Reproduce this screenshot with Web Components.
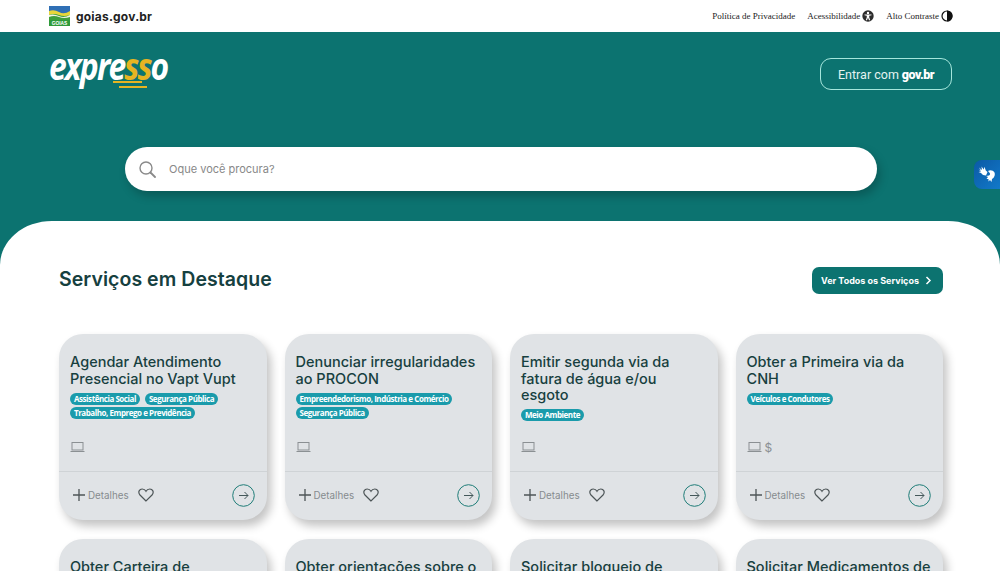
<!DOCTYPE html>
<html lang="pt-BR">
<head>
<meta charset="utf-8">
<title>Expresso</title>
<style>
    html, body { margin: 0; height: 571px; overflow: hidden; }
    body { background: #0c7370; font-family: 'Inter', sans-serif; }
</style>
</head>
<body>
<gov-topbar></gov-topbar>
<hero-header></hero-header>
<services-section>
    <service-card title="Agendar Atendimento Presencial no Vapt Vupt" tags="Assistência Social|Segurança Pública|Trabalho, Emprego e Previdência"></service-card>
    <service-card title="Denunciar irregularidades ao PROCON" tags="Empreendedorismo, Indústria e Comércio|Segurança Pública"></service-card>
    <service-card title="Emitir segunda via da fatura de água e/ou esgoto" tags="Meio Ambiente"></service-card>
    <service-card title="Obter a Primeira via da CNH" tags="Veículos e Condutores" paid></service-card>
    <service-card title="Obter Carteira de"></service-card>
    <service-card title="Obter orientações sobre o"></service-card>
    <service-card title="Solicitar bloqueio de"></service-card>
    <service-card title="Solicitar Medicamentos de"></service-card>
</services-section>
<vlibras-tab></vlibras-tab>

<script>
class GovTopbar extends HTMLElement {
    constructor() {
        super();
        this.attachShadow({ mode: 'open' }).innerHTML = `
<style>
    :host { display: flex; align-items: center; justify-content: space-between; height: 32px; background: #fff; padding: 0 47px 0 49px; }
    .brand { display: flex; align-items: center; gap: 6px; }
    .brand svg { display: block; }
    .brand span { font: 700 12px 'Inter', sans-serif; color: #222; letter-spacing: .2px; }
    nav { display: flex; align-items: center; gap: 12px; font: 9px 'Liberation Serif', serif; color: #222; }
    nav div { display: flex; align-items: center; gap: 2px; }
</style>
<div class="brand">
    <svg width="21" height="20" viewBox="0 0 21 20">
        <rect width="21" height="20" fill="#3f9e3c"/>
        <rect width="21" height="8" fill="#2f6fb5"/>
        <path d="M0 5 Q5 3 10 6 T21 5 V9 Q15 11 10 9 T0 9Z" fill="#e8d63a"/>
        <path d="M0 9 Q5 7.500 10 10 T21 9 V11 Q15 13 10 11 T0 11Z" fill="#f3f3e4"/>
        <rect y="14" width="21" height="6" fill="#2f9a3a"/>
        <text x="10.500" y="18.800" text-anchor="middle" font-family="Liberation Sans, sans-serif" font-size="4.800" font-weight="700" fill="#fff">GOIAS</text>
    </svg>
    <span>goias.gov.br</span>
</div>
<nav>
    <div>Política de Privacidade</div>
    <div>Acessibilidade
        <svg width="12" height="12" viewBox="0 0 12 12"><circle cx="6" cy="6" r="5.700" fill="#2d2d2d"/><circle cx="6" cy="2.900" r="1.200" fill="#fff"/><path d="M2.500 4.400 H9.500 V5.200 L7.200 5.800 V7.200 L8.200 10.200 H7 L6 7.800 L5 10.200 H3.800 L4.800 7.200 V5.800 L2.500 5.200Z" fill="#fff"/></svg>
    </div>
    <div>Alto Contraste
        <svg width="12" height="12" viewBox="0 0 12 12"><circle cx="6" cy="6" r="5" fill="#fff" stroke="#111" stroke-width="1.200"/><path d="M6 .500 A5.500 5.500 0 0 1 6 11.500Z" fill="#111"/></svg>
    </div>
</nav>`;
    }
}

class HeroHeader extends HTMLElement {
    constructor() {
        super();
        this.attachShadow({ mode: 'open' }).innerHTML = `
<style>
    :host { display: block; height: 189px; padding: 0 48px 0 49px; box-sizing: border-box; color: #fff; }
    .top { display: flex; justify-content: space-between; align-items: flex-start; height: 115px; }
    .logo { position: relative; width: 118px; height: 60px; }
    .word { display: block; margin-top: 12px; font: italic 700 37px/44px 'Open Sans', sans-serif; letter-spacing: -2.2px; color: #fff; transform: scaleX(.86); transform-origin: left top; white-space: nowrap; }
    .word b { color: #e6b422; font-weight: 700; }
    .logo i { position: absolute; height: 2px; background: #e6b422; }
    .login { margin-top: 26px; width: 132px; height: 32px; box-sizing: border-box; border: 1px solid #a5e6dc; border-radius: 11px; display: flex; align-items: center; justify-content: center; gap: 3px; padding-top: 1px; font: 12.500px 'Roboto', sans-serif; color: #e4f3f1; }
    .login b { font-weight: 900; color: #fff; letter-spacing: -.5px; }
</style>
<div class="top">
    <div class="logo">
        <span class="word">expre<b>ss</b>o</span>
        <i style="left:64px;top:49px;width:29px"></i>
        <i style="left:70px;top:54px;width:28px"></i>
    </div>
    <div class="login">Entrar com <b>gov.br</b></div>
</div>
<search-box></search-box>`;
    }
}

class SearchBox extends HTMLElement {
    constructor() {
        super();
        this.attachShadow({ mode: 'open' }).innerHTML = `
<style>
    :host { display: flex; align-items: center; gap: 13px; width: 752px; height: 44px; margin-left: 76px; padding-left: 14px; box-sizing: border-box; background: #fff; border-radius: 22px; box-shadow: 3px 5px 10px rgba(0,0,0,.22); }
    svg { display: block; }
    span { font: 11px 'Inter', sans-serif; color: #888; }
</style>
<svg width="17" height="17" viewBox="0 0 17 17" fill="none" stroke="#8a8a8a" stroke-width="1.400"><circle cx="7" cy="7" r="6"/><path d="M11.500 11.500 L16 16" stroke-linecap="round" stroke-width="1.800"/></svg>
<span>Oque você procura?</span>`;
    }
}

class ServicesSection extends HTMLElement {
    constructor() {
        super();
        this.attachShadow({ mode: 'open' }).innerHTML = `
<style>
    :host { display: block; background: #fff; border-radius: 52px 52px 0 0 / 44px 44px 0 0; padding: 46px 57px 0 59px; height: 350px; box-sizing: border-box; }
    .head { display: flex; justify-content: space-between; align-items: flex-start; height: 27px; margin-bottom: 40px; }
    h2 { margin: 0; font: 600 19.500px/24px 'Inter', sans-serif; color: #16403f; letter-spacing: .05px; }
    .all { display: flex; align-items: center; gap: 6px; width: 131px; height: 27px; box-sizing: border-box; padding-left: 9px; background: #0c7370; border-radius: 7px; font: 700 9px 'Inter', sans-serif; color: #fff; }
    .grid { display: grid; grid-template-columns: repeat(4, 1fr); column-gap: 18px; row-gap: 19px; }
</style>
<div class="head">
    <h2>Serviços em Destaque</h2>
    <div class="all">Ver Todos os Serviços
        <svg width="7" height="9" viewBox="0 0 7 9" fill="none" stroke="#fff" stroke-width="1.500"><path d="M1.500 1 L5 4.500 L1.500 8"/></svg>
    </div>
</div>
<div class="grid"><slot></slot></div>`;
    }
}

const cardTemplate = document.createElement('template');
cardTemplate.innerHTML = `
<style>
    :host { display: flex; flex-direction: column; height: 186px; box-sizing: border-box; background: #e0e3e6; border-radius: 24px; box-shadow: 4px 6px 10px rgba(0,0,0,.24); }
    .body { flex: 1; display: flex; flex-direction: column; padding: 20px 11px 0; min-height: 0; }
    h3 { margin: 0 0 5.500px; font: 500 14.500px/16.500px 'Inter', sans-serif; color: #17403f; }
    .tags { display: flex; flex-wrap: wrap; gap: 2px 5px; }
    .tags span { display: block; height: 12px; padding: 0 4px; border-radius: 6px; background: #1a9bab; color: #fff; font: 700 8px/12px 'Open Sans', sans-serif; letter-spacing: -.45px; }
    .kind { margin-top: auto; height: 30px; display: flex; align-items: flex-start; gap: 3px; color: #8b9093; font: 12px/14px 'Inter', sans-serif; }
    .foot { flex: none; display: flex; align-items: center; height: 49px; box-sizing: border-box; border-top: 1px solid #cfd3d6; padding: 0 12px 2px 14px; color: #868b8e; font: 9.800px 'Inter', sans-serif; }
    .foot svg { display: block; }
    .foot .plus { margin-right: 3px; }
    .foot .heart { margin-left: 9px; }
    .foot .go { margin-left: auto; }
</style>
<div class="body">
    <h3></h3>
    <div class="tags"></div>
    <div class="kind">
        <svg width="15" height="12" viewBox="0 0 15 12" fill="none" stroke="#8b9093" stroke-width="1"><rect x="2" y="1.500" width="11" height="7.500"/><path d="M.500 10.500 H14.500"/></svg>
    </div>
</div>
<div class="foot">
    <svg class="plus" width="12" height="12" viewBox="0 0 12 12" stroke="#4d5557" stroke-width="1.300"><path d="M6 0 V12 M0 6 H12"/></svg>
    Detalhes
    <svg class="heart" width="16" height="14" viewBox="0 0 16 14" fill="none" stroke="#4d5557" stroke-width="1.200"><path d="M8 13 L2 7 C-.500 4 1.500 1 4.200 1 C6 1 7.300 2 8 3.300 C8.700 2 10 1 11.800 1 C14.500 1 16.500 4 14 7Z"/></svg>
    <svg class="go" width="23" height="23" viewBox="0 0 23 23" fill="none" stroke="#1f7d78" stroke-width="1"><circle cx="11.500" cy="11.500" r="10.800"/><path d="M7 11.500 H16 M12.500 8 L16 11.500 L12.500 15" stroke="#44585a"/></svg>
</div>`;

class ServiceCard extends HTMLElement {
    constructor() {
        super();
        this.attachShadow({ mode: 'open' }).appendChild(cardTemplate.content.cloneNode(true));
    }
    connectedCallback() {
        const root = this.shadowRoot;
        root.querySelector('h3').textContent = this.getAttribute('title');
        const tags = root.querySelector('.tags');
        (this.getAttribute('tags') || '').split('|').filter(Boolean).forEach(t => {
            const s = document.createElement('span');
            s.textContent = t;
            tags.appendChild(s);
        });
        if (this.hasAttribute('paid')) {
            const d = document.createElement('span');
            d.textContent = '$';
            root.querySelector('.kind').appendChild(d);
        }
    }
}

class VlibrasTab extends HTMLElement {
    constructor() {
        super();
        this.attachShadow({ mode: 'open' }).innerHTML = `
<style>
    :host { position: fixed; right: 0; top: 160px; width: 26px; height: 29px; background: linear-gradient(135deg, #0b5aa6, #1279c9); border-radius: 8px 0 0 8px; display: flex; align-items: center; justify-content: center; }
    svg { display: block; }
</style>
<svg width="18" height="17" viewBox="0 0 18 17" fill="#fff">
    <path d="M1 1.500 L4 4 L3.500 .500 L5.800 3.500 L6.500 .800 L7.800 4.500 L9.500 6 L8 9.500 L5 9 L3 7 L.500 6 L3 5.500 L.500 3.500 L3 4.500Z"/>
    <path d="M10 5 C12 3.500 15 4 16.500 6.500 C17.500 9 16 12 14 13 L13.500 16 L12 14 L10.500 15.500 L10.500 13 L8.500 13 L10 11 L8 10 L11 9.500 C12 9 12.500 7.500 11.500 6.800Z"/>
</svg>`;
    }
}

customElements.define('gov-topbar', GovTopbar);
customElements.define('search-box', SearchBox);
customElements.define('hero-header', HeroHeader);
customElements.define('services-section', ServicesSection);
customElements.define('service-card', ServiceCard);
customElements.define('vlibras-tab', VlibrasTab);
</script>
</body>
</html>
